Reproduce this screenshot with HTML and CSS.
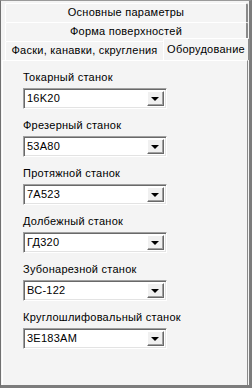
FILE: index.html
```html
<!DOCTYPE html>
<html lang="ru">
<head>
  <meta charset="UTF-8">
  <title>Оборудование</title>
  <link rel="stylesheet" href="styles.css">
</head>
<body>
  <div class="window">
    <div class="tabs">
      <div class="tab-row">
        <div class="tab wide">Основные параметры</div>
      </div>
      <div class="tab-row">
        <div class="tab wide">Форма поверхностей</div>
      </div>
      <div class="tab-row">
        <div class="tab grow">Фаски, канавки, скругления</div>
        <div class="tab active">Оборудование</div>
      </div>
    </div>

    <div class="panel">
      <div class="field">
        <label>Токарный станок</label>
        <div class="combo"><span class="value">16K20</span><span class="drop"></span></div>
      </div>
      <div class="field">
        <label>Фрезерный станок</label>
        <div class="combo"><span class="value">53A80</span><span class="drop"></span></div>
      </div>
      <div class="field">
        <label>Протяжной станок</label>
        <div class="combo"><span class="value">7A523</span><span class="drop"></span></div>
      </div>
      <div class="field">
        <label>Долбежный станок</label>
        <div class="combo"><span class="value">ГД320</span><span class="drop"></span></div>
      </div>
      <div class="field">
        <label>Зубонарезной станок</label>
        <div class="combo"><span class="value">ВС-122</span><span class="drop"></span></div>
      </div>
      <div class="field">
        <label>Круглошлифовальный станок</label>
        <div class="combo"><span class="value">3E183AM</span><span class="drop"></span></div>
      </div>
    </div>
  </div>
</body>
</html>
```

FILE: styles.css
```css
body {
  margin: 0;
  font-family: "Liberation Sans", Arial, sans-serif;
  font-size: 11px;
  letter-spacing: 0.25px;
  color: #000;
  background-color: #f4f4f4;
}

.window {
  width: 252px;
  height: 388px;
  box-sizing: border-box;
  border-top: 1px solid #9a9a9a;
  border-left: 1px solid #707070;
  border-right: 3px solid #7c7c7c;
  border-bottom: 3px solid #7c7c7c;
  padding: 2px 0 0 1px;
  display: flex;
  flex-direction: column;
  background-color: #f4f4f4;
}

.tabs {
  padding: 0 1px 0 3px;
}

.tab-row {
  display: flex;
  height: 19px;
}

.tab {
  box-sizing: border-box;
  height: 19px;
  line-height: 17px;
  text-align: center;
  background-color: #f4f4f4;
  border-top: 1px solid #ffffff;
  border-left: 1px solid #ffffff;
  border-right: 2px solid #8a8a8a;
  border-top-right-radius: 2px;
  border-top-left-radius: 2px;
  white-space: nowrap;
}

.tab.wide {
  flex: 1;
}

.tab.grow {
  width: 159px;
  border-right: 1px solid #a0a0a0;
}

.tab.active {
  position: relative;
  z-index: 1;
  flex: 1;
  height: 22px;
  margin: -3px -2px -1px -1px;
  line-height: 20px;
  border-right: 2px solid #8a8a8a;
}

.panel {
  flex: 1;
  margin-right: 1px;
  border-top: 1px solid #ffffff;
  border-left: 1px solid #ffffff;
  border-right: 1px solid #8a8a8a;
  padding: 10px 0 0 20px;
  display: flex;
  flex-direction: column;
  gap: 10px;
}

.field {
  display: flex;
  flex-direction: column;
  gap: 4px;
}

.field label {
  height: 13px;
  line-height: 13px;
}

.combo {
  box-sizing: border-box;
  width: 144px;
  height: 21px;
  display: flex;
  align-items: stretch;
  background-color: #ffffff;
  border: 1px solid;
  border-color: #a0a0a0 #ffffff #ffffff #a0a0a0;
  box-shadow: inset 1px 1px 0 #696969, inset -1px -1px 0 #e3e3e3;
  padding: 2px 2px 2px 2px;
}

.combo .value {
  flex: 1;
  line-height: 15px;
  padding-left: 1px;
}

.drop {
  box-sizing: border-box;
  width: 17px;
  background-color: #f0f0f0;
  border-top: 1px solid #ffffff;
  border-left: 1px solid #ffffff;
  border-right: 1px solid #696969;
  border-bottom: 1px solid #696969;
  box-shadow: inset -1px -1px 0 #a0a0a0;
  display: flex;
  align-items: center;
  justify-content: center;
}

.drop::after {
  content: "";
  width: 0;
  height: 0;
  margin: 1px 1px 0 0;
  border-left: 4px solid transparent;
  border-right: 4px solid transparent;
  border-top: 4px solid #000;
}
```
